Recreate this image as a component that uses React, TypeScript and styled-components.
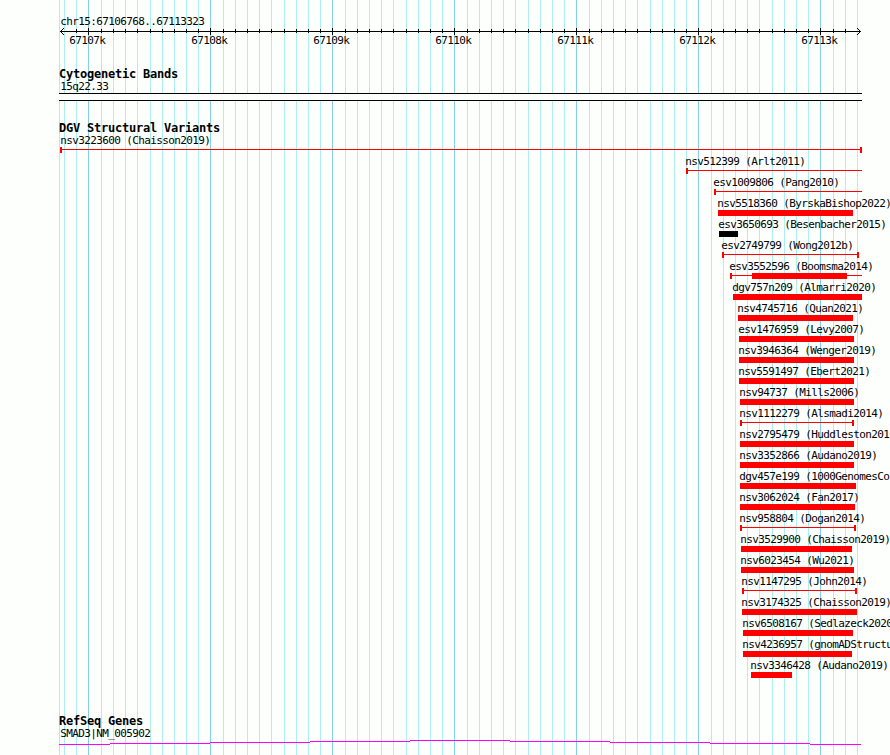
import styled, { createGlobalStyle } from 'styled-components'

const GlobalStyle = createGlobalStyle`
  body {
    margin: 0;
    padding: 0;
    background-color: #fdfffd;
    overflow: hidden;
  }
`

const Browser = styled.main`
	position: relative;
	width: 890px;
	height: 755px;
	overflow: hidden;
	color: #000;
	font-family: 'DejaVu Sans Mono', monospace;
`

const GridLines = styled.svg`
	position: absolute;
	inset: 0;
`

const Content = styled.div`
	position: relative;
	display: flex;
	flex-direction: column;
	padding-top: 15px;
`

const Label = styled.div<{ $start?: number }>`
	height: 13px;
	margin-left: ${props => props.$start ?? 60}px;
	padding-left: 0.2px;
	font-size: 11px;
	line-height: 13px;
	letter-spacing: -0.622px;
	white-space: pre;
`

const Title = styled.h2`
	height: 12px;
	margin: 0 0 0 59px;
	font-size: 12px;
	font-weight: bold;
	line-height: 13px;
	letter-spacing: -0.224px;
	white-space: pre;
`

const Ruler = styled.section`
	height: 53px;
`

const Axis = styled.svg`
	display: block;
	height: 7px;
`

const AxisLabels = styled.div`
	display: grid;
	grid-template-columns: repeat(7, 122px);
	margin-left: 69px;
	margin-top: -1px;
`

const Track = styled.section<{ $height: number }>`
	height: ${props => props.$height}px;
`

const Band = styled.div`
	width: 803px;
	height: 8px;
	box-sizing: border-box;
	margin: 0 0 0 59px;
	border: solid #000;
	border-width: 1px 0;
	background: #fdfffd;
`

const VariantRow = styled.div`
	height: 21px;
`

const Bar = styled.div<{ $start: number; $end: number; $color?: string }>`
	width: ${props => props.$end - props.$start}px;
	height: 6px;
	margin-left: ${props => props.$start}px;
	background: ${props => props.$color ?? '#f00'};
`

const Span = styled.div<{ $start: number; $end: number; $open?: boolean }>`
	display: flex;
	box-sizing: border-box;
	width: ${props => props.$end - props.$start}px;
	height: 6px;
	margin-left: ${props => props.$start}px;
	border: solid #f00;
	border-width: 0 ${props => (props.$open ? 0 : 2)}px 0 2px;
	background: linear-gradient(#f00, #f00) 0 2px / 100% 1px no-repeat;
`

const Core = styled.div<{ $offset: number; $width: number }>`
	width: ${props => props.$width}px;
	margin-left: ${props => props.$offset}px;
	background: #f00;
`

const GeneLine = styled.svg`
	display: block;
`

interface Variant {
	name: string
	start: number
	end: number
	kind?: 'bar' | 'span' | 'open'
	color?: string
	core?: [number, number]
}

const variants: Variant[] = [
	{ name: 'nsv3223600 (Chaisson2019)', start: 60, end: 862, kind: 'span' },
	{ name: 'nsv512399 (Arlt2011)', start: 686, end: 862, kind: 'open' },
	{ name: 'esv1009806 (Pang2010)', start: 714, end: 862, kind: 'open' },
	{ name: 'nsv5518360 (ByrskaBishop2022)', start: 718, end: 853 },
	{ name: 'esv3650693 (Besenbacher2015)', start: 719, end: 738, color: '#000' },
	{ name: 'esv2749799 (Wong2012b)', start: 722, end: 859, kind: 'span' },
	{ name: 'esv3552596 (Boomsma2014)', start: 730, end: 862, kind: 'open', core: [752, 847] },
	{ name: 'dgv757n209 (Almarri2020)', start: 733, end: 862 },
	{ name: 'nsv4745716 (Quan2021)', start: 738, end: 853 },
	{ name: 'esv1476959 (Levy2007)', start: 739, end: 854 },
	{ name: 'nsv3946364 (Wenger2019)', start: 739, end: 854 },
	{ name: 'nsv5591497 (Ebert2021)', start: 739, end: 854 },
	{ name: 'nsv94737 (Mills2006)', start: 740, end: 854 },
	{ name: 'nsv1112279 (Alsmadi2014)', start: 740, end: 854, kind: 'span' },
	{ name: 'nsv2795479 (Huddleston201', start: 740, end: 854 },
	{ name: 'nsv3352866 (Audano2019)', start: 740, end: 854 },
	{ name: 'dgv457e199 (1000GenomesCo', start: 740, end: 856 },
	{ name: 'nsv3062024 (Fan2017)', start: 740, end: 855 },
	{ name: 'nsv958804 (Dogan2014)', start: 740, end: 856, kind: 'span' },
	{ name: 'nsv3529900 (Chaisson2019)', start: 741, end: 852 },
	{ name: 'nsv6023454 (Wu2021)', start: 741, end: 854 },
	{ name: 'nsv1147295 (John2014)', start: 742, end: 857, kind: 'span' },
	{ name: 'nsv3174325 (Chaisson2019)', start: 742, end: 857 },
	{ name: 'nsv6508167 (Sedlazeck2020', start: 743, end: 853 },
	{ name: 'nsv4236957 (gnomADStructu', start: 743, end: 852 },
	{ name: 'nsv3346428 (Audano2019)', start: 751, end: 792 },
]

const majors = [88, 210, 332, 454, 576, 698, 820]
const steps = [13, 25, 37, 49, 61, 74, 86, 98, 110]

// the fifth line of the first block rounds up one pixel
const minors = [
	64,
	76,
	...majors.flatMap(x => steps.map(step => (x === 88 && step === 61 ? x + 62 : x + step))),
].filter(x => x < 861)

// no ticks under the arrow heads
const ticks = minors.filter(x => x > 64 && x < 857)

const labels = ['67107k', '67108k', '67109k', '67110k', '67111k', '67112k', '67113k']

const gene =
	'M59 4.5H110M110 3.5H210M210 2.5H310M310 1.5H410M410 .5H510M510 1.5H610M610 2.5H710M710 3.5H810M810 4.5H861'

function VariantGlyph({ start, end, kind = 'bar', color, core }: Variant) {
	if (kind === 'bar') {
		return <Bar $start={start} $end={end} $color={color} />
	}
	return (
		<Span $start={start} $end={end} $open={kind === 'open'}>
			{core && <Core $offset={core[0] - start - 2} $width={core[1] - core[0]} />}
		</Span>
	)
}

function App() {
	return (
		<>
			<GlobalStyle />
			<Browser>
				<GridLines width="890" height="755" shapeRendering="crispEdges">
					{[59, ...minors].map(x => (
						<rect key={x} x={x} width="1" height="755" fill="#afeeee" />
					))}
					{majors.map(x => (
						<rect key={x} x={x} width="1" height="755" fill="#87ceeb" />
					))}
				</GridLines>
				<Content>
					<Ruler>
						<Label>chr15:67106768..67113323</Label>
						<Axis width="890" height="7" shapeRendering="crispEdges">
							<rect x="60" y="3" width="801" height="1" />
							{ticks.map(x => (
								<rect key={x} x={x} y="1" width="1" height="4" />
							))}
							{majors.map(x => (
								<rect key={x} x={x} width="1" height="7" />
							))}
							{[1, 2, 3].map(n => (
								<g key={n}>
									<rect x={60 + n} y={3 - n} width="1" height="1" />
									<rect x={60 + n} y={3 + n} width="1" height="1" />
									<rect x={860 - n} y={3 - n} width="1" height="1" />
									<rect x={860 - n} y={3 + n} width="1" height="1" />
								</g>
							))}
						</Axis>
						<AxisLabels>
							{labels.map(label => (
								<Label key={label} $start={0}>
									{label}
								</Label>
							))}
						</AxisLabels>
					</Ruler>

					<Track $height={54}>
						<Title>Cytogenetic Bands</Title>
						<Label>15q22.33</Label>
						<Band />
					</Track>

					<Track $height={593}>
						<Title>DGV Structural Variants</Title>
						{variants.map(variant => (
							<VariantRow key={variant.name}>
								<Label $start={Math.max(60, variant.start - 1)}>{variant.name}</Label>
								<VariantGlyph {...variant} />
							</VariantRow>
						))}
					</Track>

					<Track $height={40}>
						<Title>RefSeq Genes</Title>
						<Label>SMAD3|NM_005902</Label>
						<GeneLine width="890" height="5" shapeRendering="crispEdges">
							<path d={gene} stroke="#f0f" fill="none" />
						</GeneLine>
					</Track>
				</Content>
			</Browser>
		</>
	)
}

export default App
